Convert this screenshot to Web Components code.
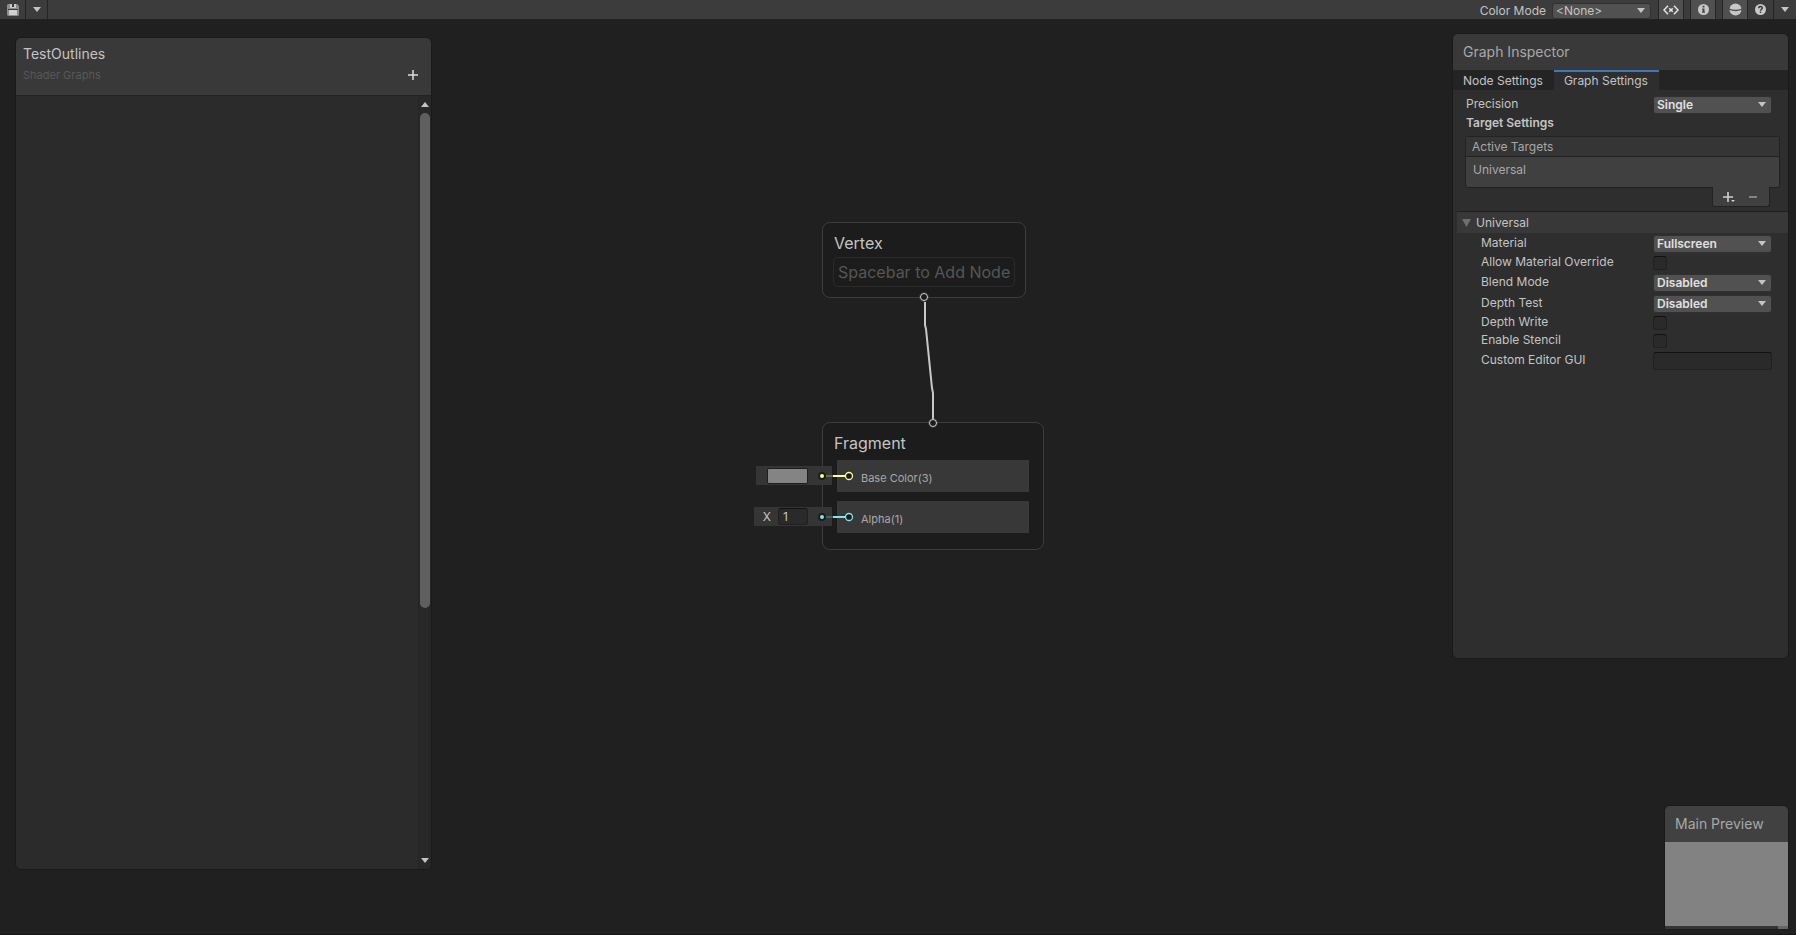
<!DOCTYPE html>
<html lang="en">
<head>
<meta charset="utf-8">
<title>TestOutlines</title>
<style>
  html, body {
    height: 100%;
    margin: 0;
  }

  body {
    --text: #c4c4c4;
    --text_dim: #a8a8a8;
    --line: #1a1a1a;
    --bar: #3c3c3c;
    --header: #393939;
    --panel: #2e2e2e;
    --control: #515151;
    --field: #2a2a2a;
    box-sizing: border-box;
    display: flex;
    flex-direction: column;
    overflow: hidden;
    background: #202020;
    border-bottom: 1px solid #1c1014;
    color: var(--text);
    font-family: Inter, Roboto, "Liberation Sans", sans-serif;
    font-size: 12px;
    line-height: 16px;
  }
</style>
</head>
<body>
<sg-toolbar></sg-toolbar>
<sg-canvas>
  <sg-edge></sg-edge>
  <sg-node class="vertex" title-text="Vertex" port="bottom">
    <sg-hint>Spacebar to Add Node</sg-hint>
  </sg-node>
  <sg-node class="fragment" title-text="Fragment" port="top">
    <sg-block kind="color" name="Base Color(3)"></sg-block>
    <sg-block kind="float" name="Alpha(1)" value="1"></sg-block>
  </sg-node>
  <sg-blackboard title-text="TestOutlines" path="Shader Graphs"></sg-blackboard>
  <sg-inspector></sg-inspector>
  <sg-preview></sg-preview>
</sg-canvas>

<script>
const reset = `
  :host, * { box-sizing: border-box; }
  button, input, select {
    margin: 0;
    padding: 0;
    border: 0;
    background: none;
    color: inherit;
    font: inherit;
  }
  svg { display: block; }
`;

const arrowDown = `<svg width="8" height="5" viewBox="0 0 8 5" fill="#c4c4c4"><path d="M0 0h8L4 5z"/></svg>`;

class SgElement extends HTMLElement {
  constructor() {
    super();
    const shadowRoot = this.attachShadow({ mode: "open" });
    const template = document.createElement("template");
    template.innerHTML = `<style>${reset}</style>` + this.render();
    shadowRoot.appendChild(template.content.cloneNode(true));
  }

  render() {
    return "<slot></slot>";
  }
}

class SgToolbar extends SgElement {
  render() {
    return `
    <style>
      :host {
        display: flex;
        flex: none;
        height: 20px;
        padding-left: 1px;
        background: var(--bar);
        border-bottom: 1px solid #232323;
      }
      button {
        display: flex;
        align-items: center;
        justify-content: center;
        width: 26px;
        border-right: 1px solid #242424;
      }
      .save { width: 25px; }
      .narrow { width: 22px; }
      .on { background: #505050; border-left: 1px solid #242424; }
      .right {
        display: flex;
        margin-left: auto;
      }
      .mode {
        display: flex;
        align-items: center;
        padding: 2px 7px 0 0;
      }
      .group { display: flex; margin-right: 6px; }
      .last { border-right: 0; }
    </style>
    <button class="save" aria-label="Save Asset">
      <svg width="12" height="12" viewBox="0 0 12 12">
        <path d="M1 0h9l2 2v9l-1 1H1l-1-1V1z" fill="#8c8c8c"/>
        <path d="M3 0h6v4H3z" fill="#c8c8c8"/>
        <path d="M5 0h2v3H5z" fill="#3c3c3c"/>
        <path d="M1 5h10v1H1z" fill="#3c3c3c"/>
        <path d="M2 6h8v5H2z" fill="#d0d0d0"/>
      </svg>
    </button>
    <button class="narrow" aria-label="Save options">${arrowDown}</button>
    <div class="right">
      <div class="mode">
        <sg-dropdown label="Color Mode" value="&lt;None&gt;"></sg-dropdown>
      </div>
      <div class="group">
        <button class="on" aria-label="Blackboard">
          <svg width="16" height="10" viewBox="0 0 16 10" fill="none" stroke="#e4e4e4" stroke-width="1.5">
            <path d="M5 .8L1 5l4 4.200M11 .8L15 5l-4 4.200M6.200 3.200l3.600 3.600M9.800 3.200L6.200 6.800"/>
          </svg>
        </button>
      </div>
      <div class="group">
        <button class="on" aria-label="Graph Inspector">
          <svg width="11" height="11" viewBox="0 0 11 11">
            <circle cx="5.500" cy="5.500" r="5.500" fill="#c8c8c8"/>
            <path d="M4.500 1.800h2v1.600h-2zM4 4.500h2.500v3.300H7v1H4v-1h.5V5.500H4z" fill="#444"/>
          </svg>
        </button>
      </div>
      <button class="on" aria-label="Main Preview">
        <svg width="13" height="13" viewBox="0 0 13 13">
          <circle cx="6.500" cy="6.500" r="6" fill="#c8c8c8"/>
          <path d="M0 6q6.500 3 13 0" fill="none" stroke="#505050" stroke-width="1.300"/>
        </svg>
      </button>
      <button aria-label="Help">
        <svg width="11" height="11" viewBox="0 0 11 11">
          <circle cx="5.500" cy="5.500" r="5.500" fill="#c8c8c8"/>
          <path d="M3.700 4.200c0-2.400 3.700-2.300 3.600-.1C7.200 5.300 5.500 5.200 5.500 6.800" fill="none" stroke="#333" stroke-width="1.400"/>
          <path d="M4.800 7.600h1.400V9H4.800z" fill="#333"/>
        </svg>
      </button>
      <button class="narrow last" aria-label="Help options">${arrowDown}</button>
    </div>`;
  }
}

class SgDropdown extends SgElement {
  render() {
    return `
    <style>
      :host {
        display: flex;
        align-items: center;
        gap: 6px;
      }
      .box {
        display: grid;
        align-items: center;
        width: 99px;
        height: 16px;
        background: var(--control);
        border: 1px solid #303030;
        border-radius: 3px;
      }
      select, svg { grid-area: 1 / 1; }
      select {
        appearance: none;
        width: 100%;
        height: 14px;
        padding-left: 3px;
        line-height: 14px;
      }
      svg {
        justify-self: end;
        margin-right: 5px;
        pointer-events: none;
      }
    </style>
    <label for="value">${this.getAttribute("label")}</label>
    <div class="box">
      <select id="value"><option>${this.getAttribute("value").replace(/</g, "&lt;")}</option></select>
      ${arrowDown}
    </div>`;
  }
}

class SgCanvas extends SgElement {
  render() {
    return `
    <style>
      :host {
        display: block;
        position: relative;
        flex: 1;
        min-height: 0;
      }
      ::slotted(*) { position: absolute; }
      ::slotted(sg-edge) { left: 920px; top: 273px; }
      ::slotted(.vertex) { left: 822px; top: 202px; }
      ::slotted(.fragment) { left: 822px; top: 402px; }
      ::slotted(sg-blackboard) { left: 15px; top: 17px; bottom: 64px; width: 417px; }
      ::slotted(sg-inspector) { right: 7px; top: 13px; width: 337px; height: 626px; }
      ::slotted(sg-preview) { right: 7px; bottom: 4px; width: 125px; height: 125px; }
    </style>
    <slot></slot>`;
  }
}

class SgEdge extends SgElement {
  render() {
    return `
    <style>:host { display: block; }</style>
    <svg width="20" height="135" viewBox="0 0 20 135" fill="none" stroke="#c8c8c8" stroke-width="2">
      <path d="M5 9v23l1 4 6 59 1 5v30"/>
    </svg>`;
  }
}

class SgNode extends SgElement {
  render() {
    return `
    <style>
      :host {
        display: flex;
        flex-direction: column;
        padding: 9px 10px 10px;
        background: #1c1c1c;
        border: 1px solid #3c3c3c;
        border-radius: 8px;
      }
      h2 {
        margin: 0 0 3px;
        padding: 0 1px;
        font-size: 16px;
        font-weight: 400;
        line-height: 22px;
      }
      .port {
        position: absolute;
        left: 50%;
        width: 8px;
        height: 8px;
        margin-left: -4px;
        background: #1c1c1c;
        border: 1px solid #d4d4d4;
        border-radius: 50%;
        outline: 1px solid #8884;
      }
      .top { top: -4px; }
      .bottom { bottom: -4px; }
    </style>
    <h2>${this.getAttribute("title-text")}</h2>
    <slot></slot>
    <span class="port ${this.getAttribute("port")}"></span>`;
  }
}

class SgHint extends SgElement {
  render() {
    return `
    <style>
      :host {
        display: block;
        padding: 3px 4px;
        border: 1px solid #2a2a2a;
        border-radius: 5px;
        color: #565656;
        font-size: 16px;
        line-height: 22px;
        white-space: nowrap;
      }
    </style>
    <slot></slot>`;
  }
}

class SgBlock extends SgElement {
  render() {
    const name = this.getAttribute("name");
    const isColor = this.getAttribute("kind") === "color";
    const control = isColor
      ? `<input type="color" value="#848484" aria-label="${name}">`
      : `<label for="x">X</label><input id="x" type="text" value="${this.getAttribute("value")}">`;
    return `
    <style>
      :host {
        --port: ${isColor ? "#f6ff9a" : "#84e4e7"};
        display: flex;
        align-items: center;
        position: relative;
        width: 192px;
        height: 32px;
        margin: 3px 4px 6px;
        padding: 4px 0 0 24px;
        background: #383838;
        color: var(--text_dim);
      }
      .name { font-size: 11px; }
      .default {
        position: absolute;
        right: 197px;
        top: 6px;
        display: flex;
        align-items: center;
        height: 19px;
        padding: 0 6px 0 ${isColor ? 11 : 9}px;
        background: #353535;
        color: var(--text);
      }
      label { margin-right: 7px; }
      input[type="text"] {
        width: 30px;
        height: 17px;
        padding: 0 4px;
        background: var(--field);
        border: 1px solid #202020;
        border-top-color: #111;
        border-radius: 3px;
      }
      input[type="color"] {
        width: 41px;
        height: 16px;
        border: 1px solid #1e1e1e;
        border-radius: 2px;
      }
      ::-webkit-color-swatch-wrapper { padding: 0; }
      ::-webkit-color-swatch { border: 0; }
      .dot {
        width: 8px;
        height: 8px;
        margin-left: 10px;
        background: var(--port);
        border: 2px solid #1c1c1c;
        border-radius: 50%;
      }
      .link {
        position: absolute;
        left: -13px;
        top: 10px;
      }
    </style>
    <div class="default">${control}<span class="dot"></span></div>
    <svg class="link" width="32" height="12" viewBox="0 0 32 12" fill="none" stroke="var(--port)">
      <path d="M2 6h7" stroke-width="2" opacity=".25"/>
      <path d="M9 6h12" stroke-width="2"/>
      <circle cx="25" cy="6" r="3.500" fill="#1c1c1c" stroke-width="1.300"/>
    </svg>
    <span class="name">${name}</span>`;
  }
}

class SgPanel extends SgElement {
  render() {
    return `
    <style>
      :host {
        display: flex;
        flex-direction: column;
        flex: 1;
        min-height: 0;
        background: var(--panel);
        border: 1px solid var(--line);
        border-radius: 6px;
        overflow: hidden;
      }
      header {
        flex: none;
        padding: 6px 7px 11px;
        background: var(--header);
      }
      :host([plain]) header { padding: 8px 10px; color: var(--text_dim); }
      ::slotted(h1) {
        margin: 0;
        font-size: 14px;
        font-weight: 400;
        line-height: 20px;
      }
    </style>
    <header><slot name="header"></slot></header>
    <slot></slot>`;
  }
}

class SgBlackboard extends SgElement {
  render() {
    return `
    <style>
      :host { display: flex; }
      sg-panel { --panel: #2b2b2b; }
      .path {
        display: flex;
        align-items: center;
        justify-content: space-between;
        height: 20px;
        padding-top: 2px;
        color: #585858;
        font-size: 11px;
      }
      .add {
        width: 22px;
        height: 16px;
        display: flex;
        align-items: center;
        justify-content: center;
      }
      .body {
        display: flex;
        flex: 1;
        justify-content: flex-end;
        border-top: 1px solid #222;
      }
      .scroll {
        display: flex;
        flex-direction: column;
        align-items: center;
        width: 13px;
        background: #282828;
        border-left: 1px solid #252525;
      }
      .scroll button {
        display: flex;
        align-items: center;
        justify-content: center;
        width: 12px;
        height: 17px;
      }
      .up { transform: rotate(180deg); }
      .track { flex: 1; width: 10px; }
      .thumb {
        height: 67%;
        background: #5f5f5f;
        border-radius: 5px;
      }
    </style>
    <sg-panel>
      <h1 slot="header">${this.getAttribute("title-text")}</h1>
      <div class="path" slot="header">
        <span>${this.getAttribute("path")}</span>
        <button class="add" aria-label="Add property">
          <svg width="10" height="10" viewBox="0 0 10 10" stroke="#dedede" stroke-width="1.500"><path d="M0 5h10M5 0v10"/></svg>
        </button>
      </div>
      <div class="body">
        <div class="scroll">
          <button class="up" aria-label="Scroll up">${arrowDown}</button>
          <div class="track"><div class="thumb"></div></div>
          <button aria-label="Scroll down">${arrowDown}</button>
        </div>
      </div>
    </sg-panel>`;
  }
}

class SgField extends SgElement {
  render() {
    const value = this.getAttribute("value");
    const controls = {
      select: `<div class="box"><select id="value"><option>${value}</option></select>${arrowDown}</div>`,
      check: `<input id="value" type="checkbox">`,
      text: `<input id="value" type="text">`
    };
    return `
    <style>
      :host {
        display: flex;
        align-items: center;
        height: 21px;
        padding: 0 16px 0 28px;
      }
      :host([kind="check"]) { height: 18px; }
      :host([top]) { padding-left: 13px; }
      label { flex: 1; padding-bottom: 2px; }
      .box {
        display: grid;
        align-items: center;
        width: 119px;
        height: 18px;
        background: var(--control);
        border: 1px solid #303030;
        border-radius: 3px;
      }
      select, svg { grid-area: 1 / 1; }
      select {
        appearance: none;
        width: 100%;
        height: 16px;
        padding-left: 3px;
        color: #e0e0e0;
        font-weight: 600;
      }
      svg {
        justify-self: end;
        margin-right: 5px;
        pointer-events: none;
      }
      input {
        appearance: none;
        height: 18px;
        width: 119px;
        background: var(--field);
        border: 1px solid #202020;
        border-top-color: #111;
        border-radius: 3px;
      }
      input[type="checkbox"] {
        width: 14px;
        height: 14px;
        margin-right: 105px;
      }
    </style>
    <label for="value">${this.getAttribute("label")}</label>
    ${controls[this.getAttribute("kind")]}`;
  }
}

class SgTargets extends SgElement {
  render() {
    return `
    <style>
      :host {
        display: flex;
        flex-direction: column;
        margin: 5px 8px 4px 12px;
        color: var(--text_dim);
      }
      .list {
        background: #404040;
        border: 1px solid #222;
        border-radius: 3px;
      }
      .head {
        height: 20px;
        padding: 2px 6px 0;
        background: #353535;
        border-bottom: 1px solid #222;
      }
      .item { padding: 5px 7px 9px; }
      .foot {
        display: flex;
        align-items: center;
        align-self: flex-end;
        width: 58px;
        height: 20px;
        margin: -1px 10px 0 0;
        padding: 0 4px;
        background: #404040;
        border: 1px solid #222;
        border-top: 0;
        border-radius: 0 0 3px 3px;
      }
      button {
        display: flex;
        flex: 1;
        justify-content: center;
      }
    </style>
    <div class="list">
      <div class="head">Active Targets</div>
      <div class="item">Universal</div>
    </div>
    <div class="foot">
      <button aria-label="Add target">
        <svg width="14" height="12" viewBox="0 0 14 12"><path d="M1 6h10M6 1v10" stroke="#d0d0d0" stroke-width="1.600"/><path d="M9 9h4l-2 2z" fill="#d0d0d0"/></svg>
      </button>
      <button aria-label="Remove target">
        <svg width="8" height="2"><path d="M0 0h8v2H0z" fill="#848484"/></svg>
      </button>
    </div>`;
  }
}

class SgInspector extends SgElement {
  render() {
    return `
    <style>
      :host { display: flex; }
      .tabs {
        display: flex;
        flex: none;
        height: 20px;
        background: #242424;
      }
      .tabs button {
        padding: 0 11px 0 10px;
        border-top: 2px solid transparent;
        line-height: 16px;
      }
      .tabs [aria-selected="true"] {
        background: var(--panel);
        border-color: #3a79bb;
      }
      .body {
        display: flex;
        flex-direction: column;
        padding-top: 4px;
      }
      h2 {
        margin: 0;
        padding: 0 13px;
        font-size: 12px;
        font-weight: 600;
        line-height: 16px;
      }
      .fold {
        display: flex;
        align-items: center;
        gap: 5px;
        height: 22px;
        margin-left: 4px;
        padding-left: 5px;
        background: #383838;
        border-top: 1px solid #202020;
      }
    </style>
    <sg-panel plain>
      <h1 slot="header">Graph Inspector</h1>
      <div class="tabs" role="tablist">
        <button role="tab" aria-selected="false">Node Settings</button>
        <button role="tab" aria-selected="true">Graph Settings</button>
      </div>
      <div class="body" role="tabpanel">
        <sg-field top kind="select" label="Precision" value="Single"></sg-field>
        <h2>Target Settings</h2>
        <sg-targets></sg-targets>
        <button class="fold" aria-expanded="true">
          <svg width="9" height="8" viewBox="0 0 9 8" fill="#6e6e6e"><path d="M0 0h9L4.500 8z"/></svg>Universal
        </button>
        <sg-field kind="select" label="Material" value="Fullscreen"></sg-field>
        <sg-field kind="check" label="Allow Material Override"></sg-field>
        <sg-field kind="select" label="Blend Mode" value="Disabled"></sg-field>
        <sg-field kind="select" label="Depth Test" value="Disabled"></sg-field>
        <sg-field kind="check" label="Depth Write"></sg-field>
        <sg-field kind="check" label="Enable Stencil"></sg-field>
        <sg-field kind="text" label="Custom Editor GUI"></sg-field>
      </div>
    </sg-panel>`;
  }
}

class SgPreview extends SgElement {
  render() {
    return `
    <style>
      :host { display: flex; }
      sg-panel { --header: #414141; border-radius: 6px 6px 0 0; }
      .view { flex: 1; background: #828282; }
      .grip {
        height: 3px;
        background: linear-gradient(#666, #666) right / 10px 3px no-repeat, #353535;
      }
    </style>
    <sg-panel plain>
      <h1 slot="header">Main Preview</h1>
      <div class="view"></div>
      <div class="grip"></div>
    </sg-panel>`;
  }
}

window.customElements.define("sg-dropdown", SgDropdown);
window.customElements.define("sg-toolbar", SgToolbar);
window.customElements.define("sg-canvas", SgCanvas);
window.customElements.define("sg-edge", SgEdge);
window.customElements.define("sg-node", SgNode);
window.customElements.define("sg-hint", SgHint);
window.customElements.define("sg-block", SgBlock);
window.customElements.define("sg-panel", SgPanel);
window.customElements.define("sg-field", SgField);
window.customElements.define("sg-targets", SgTargets);
window.customElements.define("sg-blackboard", SgBlackboard);
window.customElements.define("sg-inspector", SgInspector);
window.customElements.define("sg-preview", SgPreview);
</script>
</body>
</html>
